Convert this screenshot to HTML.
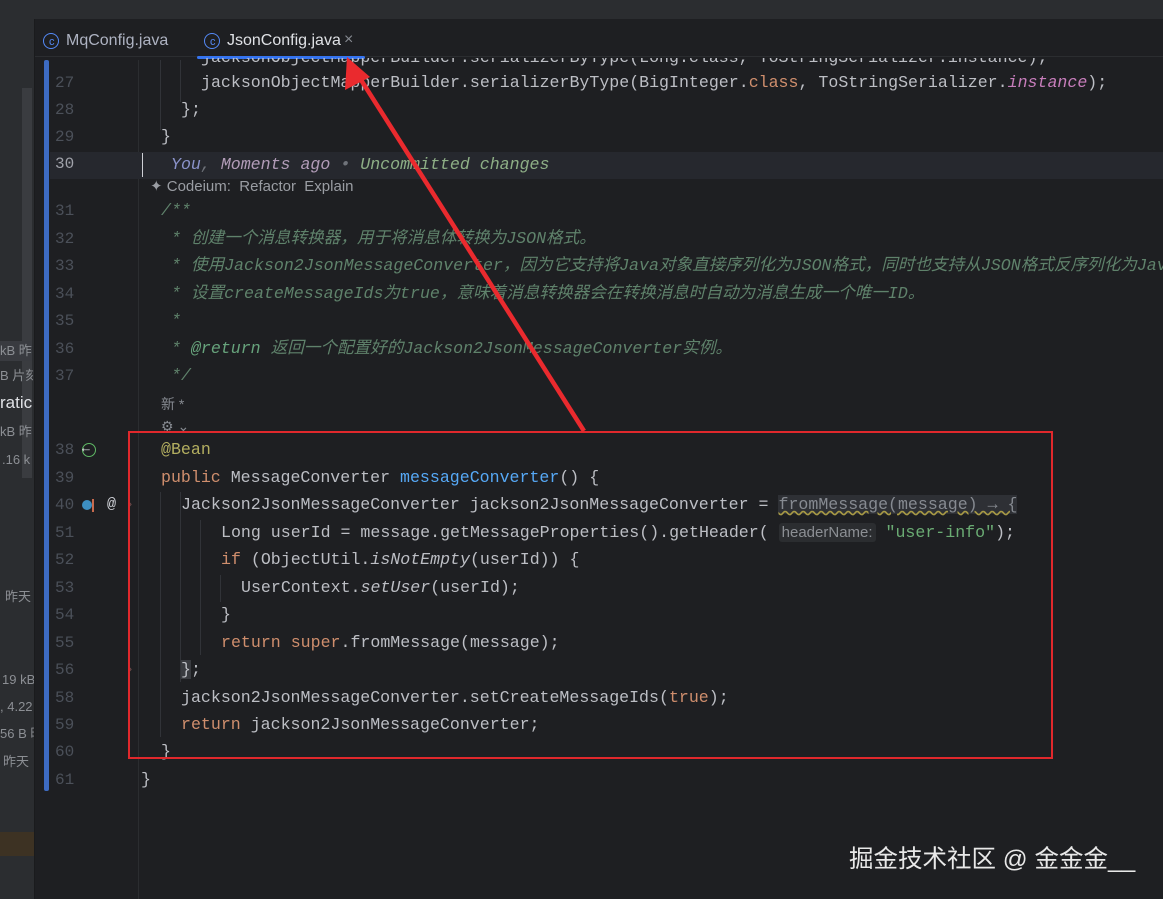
<!DOCTYPE html>
<html><head><meta charset="utf-8"><style>
*{margin:0;padding:0;box-sizing:border-box}
html,body{overflow:hidden}
body{width:1163px;height:899px;background:#1e1f22;position:relative;overflow:hidden;font-family:"Liberation Mono","Noto Sans CJK SC",monospace;font-size:16.6px;color:#bcbec4}
.a{position:absolute;white-space:pre;line-height:20px}
.ln{position:absolute;left:55px;width:20px;color:#4b5059;font-size:16px;line-height:20px}
.k{color:#cf8e6d}.m{color:#56a8f5}.an{color:#b3ae60}.s{color:#6aab73}.i{font-style:italic}.pu{color:#c77dbb}
.c{color:#5f826b;font-style:italic}.ct{color:#67a37c;font-style:italic}
.sans{font-family:"Liberation Sans","Noto Sans CJK SC",sans-serif}
.g{position:absolute;width:1px;background:#313338}
</style></head><body>
<div style="position:absolute;left:0;top:0;width:1163px;height:19px;background:#2b2d30"></div>
<div style="position:absolute;left:0;top:19px;width:1163px;height:38px;background:#1e1f22;border-bottom:1px solid #2b2d30"></div>
<div style="position:absolute;left:0;top:19px;width:34px;height:880px;background:#2b2d30"></div>
<div style="position:absolute;left:34px;top:19px;width:1px;height:880px;background:#1a1b1d"></div>
<div style="position:absolute;left:22px;top:88px;width:10px;height:390px;background:#3a3c40"></div>
<div style="position:absolute;left:0;top:832px;width:34px;height:24px;background:#3d3223"></div>
<div style="position:absolute;left:0;top:0;width:34px;height:899px;overflow:hidden">
<div class="a sans" style="left:0;top:341px;font-size:13px;color:#8c8f94;background:#393b40;width:32px">kB 昨</div>
<div class="a sans" style="left:0;top:366px;font-size:13px;color:#8c8f94">B 片刻</div>
<div class="a sans" style="left:0;top:393px;font-size:17px;color:#dfe1e5">ratic</div>
<div class="a sans" style="left:0;top:422px;font-size:13px;color:#8c8f94">kB 昨</div>
<div class="a sans" style="left:2px;top:450px;font-size:13px;color:#8c8f94">.16 k</div>
<div class="a sans" style="left:5px;top:587px;font-size:13px;color:#8c8f94">昨天</div>
<div class="a sans" style="left:2px;top:670px;font-size:13px;color:#8c8f94">19 kB</div>
<div class="a sans" style="left:0;top:697px;font-size:13px;color:#8c8f94">, 4.22</div>
<div class="a sans" style="left:0;top:724px;font-size:13px;color:#8c8f94">56 B 昨</div>
<div class="a sans" style="left:3px;top:752px;font-size:13px;color:#8c8f94">昨天</div>
</div>
<!-- tabs -->
<div style="position:absolute;left:43px;top:33px;width:16px;height:16px;border:1.6px solid #548af7;border-radius:50%"></div>
<div class="a sans" style="left:49px;top:32px;font-size:11px;color:#548af7">c</div>
<div class="a sans" style="left:66px;top:31px;font-size:16px;color:#aeb3c2">MqConfig.java</div>
<div style="position:absolute;left:204px;top:33px;width:16px;height:16px;border:1.6px solid #548af7;border-radius:50%"></div>
<div class="a sans" style="left:210px;top:32px;font-size:11px;color:#548af7">c</div>
<div class="a sans" style="left:227px;top:31px;font-size:16px;color:#dfe1e5">JsonConfig.java</div>
<div class="a sans" style="left:344px;top:30px;font-size:16px;color:#868a91">×</div>
<div style="position:absolute;left:197px;top:56px;width:168px;height:3px;background:#3574f0;border-radius:2px"></div>
<!-- gutter blue bar -->
<div style="position:absolute;left:44px;top:60px;width:5px;height:731px;background:#3d6bc2;border-radius:2px"></div>
<div style="position:absolute;left:138px;top:60px;width:1px;height:839px;background:#2b2d30"></div>
<!-- line 30 highlight -->
<div style="position:absolute;left:50px;top:152px;width:1113px;height:27px;background:#26282e"></div>
<div style="position:absolute;left:142px;top:153px;width:1px;height:24px;background:#ced0d6"></div>
<!-- indent guides -->
<div class="g" style="left:160px;top:60px;height:70px"></div>
<div class="g" style="left:180px;top:60px;height:42px"></div>
<div class="g" style="left:180px;top:492px;height:190px"></div>
<div class="g" style="left:160px;top:492px;height:245px"></div>
<div class="g" style="left:200px;top:520px;height:135px"></div>
<div class="g" style="left:220px;top:575px;height:27px"></div>
<!-- line numbers -->
<div class="ln" style="top:73px">27</div>
<div class="ln" style="top:100px">28</div>
<div class="ln" style="top:127px">29</div>
<div class="ln" style="top:154px;color:#a1a3ab">30</div>
<div class="ln" style="top:201px">31</div>
<div class="ln" style="top:229px">32</div>
<div class="ln" style="top:256px">33</div>
<div class="ln" style="top:284px">34</div>
<div class="ln" style="top:311px">35</div>
<div class="ln" style="top:339px">36</div>
<div class="ln" style="top:366px">37</div>
<div class="ln" style="top:440px">38</div>
<div class="ln" style="top:468px">39</div>
<div class="ln" style="top:495px">40</div>
<div class="ln" style="top:523px">51</div>
<div class="ln" style="top:550px">52</div>
<div class="ln" style="top:578px">53</div>
<div class="ln" style="top:605px">54</div>
<div class="ln" style="top:633px">55</div>
<div class="ln" style="top:660px">56</div>
<div class="ln" style="top:688px">58</div>
<div class="ln" style="top:715px">59</div>
<div class="ln" style="top:742px">60</div>
<div class="ln" style="top:770px">61</div>
<!-- gutter icons -->
<div style="position:absolute;left:82px;top:443px;width:14px;height:14px;border:1.5px solid #5fb865;border-radius:50%"></div>
<div class="a" style="left:82px;top:439px;font-size:13px;color:#dfe1e5">←</div>
<div style="position:absolute;left:82px;top:500px;width:10px;height:10px;background:#3d8fc2;border-radius:50%"></div>
<div style="position:absolute;left:92px;top:499px;width:2px;height:13px;background:#c76a4e"></div>
<div class="a" style="left:107px;top:495px;color:#ced0d6;font-size:15px">@</div>
<div class="a" style="left:126px;top:495px;color:#6f4a4a;font-size:13px">›</div>
<div class="a" style="left:126px;top:660px;color:#6f4a4a;font-size:13px">›</div>
<!-- code -->
<div style="position:absolute;left:0;top:0;width:1163px;height:899px;overflow:hidden">
<div class="a" style="left:201px;top:48px;clip-path:inset(10px 0 0 0)">jacksonObjectMapperBuilder.serializerByType(Long.class, ToStringSerializer.instance);</div>
<div class="a" style="left:201px;top:73px">jacksonObjectMapperBuilder.serializerByType(BigInteger.<span class="k">class</span>, ToStringSerializer.<span class="pu i">instance</span>);</div>
<div class="a" style="left:181px;top:100px">};</div>
<div class="a" style="left:161px;top:127px">}</div>
<div class="a i" style="left:171px;top:155px"><span style="color:#8a92c9">You</span><span style="color:#6f737a">,</span> <span style="color:#b29cb8">Moments ago</span> <span style="color:#6f737a">•</span> <span style="color:#8eaf86">Uncommitted changes</span></div>
<div class="a sans" style="left:150px;top:177px;font-size:15px;color:#9a9da3">✦ Codeium:  Refactor  Explain</div>
<div class="a c" style="left:161px;top:201px">/**</div>
<div class="a c" style="left:171px;top:229px">* 创建一个消息转换器，用于将消息体转换为JSON格式。</div>
<div class="a c" style="left:171px;top:256px;width:992px;overflow:hidden">* 使用Jackson2JsonMessageConverter，因为它支持将Java对象直接序列化为JSON格式，同时也支持从JSON格式反序列化为Java</div>
<div class="a c" style="left:171px;top:284px">* 设置createMessageIds为true，意味着消息转换器会在转换消息时自动为消息生成一个唯一ID。</div>
<div class="a c" style="left:171px;top:311px">*</div>
<div class="a c" style="left:171px;top:339px">* <span class="ct">@return</span> 返回一个配置好的Jackson2JsonMessageConverter实例。</div>
<div class="a c" style="left:171px;top:366px">*/</div>
<div class="a sans" style="left:161px;top:394px;font-size:14px;color:#868a91">新 *</div>
<div class="a sans" style="left:161px;top:416px;font-size:14px;color:#868a91">⚙ ⌄</div>
<div class="a an" style="left:161px;top:440px">@Bean</div>
<div class="a" style="left:161px;top:468px"><span class="k">public</span> MessageConverter <span class="m">messageConverter</span>() {</div>
<div class="a" style="left:181px;top:495px">Jackson2JsonMessageConverter jackson2JsonMessageConverter = <span style="color:#868a91;background:#2e3035;text-decoration:underline wavy #a89a45">fromMessage(message) → {</span></div>
<div class="a" style="left:221px;top:523px">Long userId = message.getMessageProperties().getHeader( <span class="sans" style="font-size:15px;color:#8c8f94;background:#2b2d30;padding:1px 3px;border-radius:3px">headerName:</span> <span class="s">"user-info"</span>);</div>
<div class="a" style="left:221px;top:550px"><span class="k">if</span> (ObjectUtil.<span class="i">isNotEmpty</span>(userId)) {</div>
<div class="a" style="left:241px;top:578px">UserContext.<span class="i">setUser</span>(userId);</div>
<div class="a" style="left:221px;top:605px">}</div>
<div class="a" style="left:221px;top:633px"><span class="k">return super</span>.fromMessage(message);</div>
<div class="a" style="left:181px;top:660px"><span style="background:#393b40">}</span>;</div>
<div class="a" style="left:181px;top:688px">jackson2JsonMessageConverter.setCreateMessageIds(<span class="k">true</span>);</div>
<div class="a" style="left:181px;top:715px"><span class="k">return</span> jackson2JsonMessageConverter;</div>
<div class="a" style="left:161px;top:742px">}</div>
<div class="a" style="left:141px;top:770px">}</div>
</div>
<!-- annotations -->
<div style="position:absolute;left:128px;top:431px;width:925px;height:328px;border:2px solid #e0282c"></div>
<svg style="position:absolute;left:0;top:0" width="1163" height="899">
<line x1="584" y1="431" x2="356" y2="72" stroke="#ea2a2e" stroke-width="4.5"/>
<polygon points="347,57 345,90 370,77" fill="#ea2a2e"/>
</svg>
<div class="a sans" style="left:849px;top:845px;font-size:24.5px;line-height:30px;color:#e8e8e8">掘金技术社区 @ 金金金__</div>
</body></html>
